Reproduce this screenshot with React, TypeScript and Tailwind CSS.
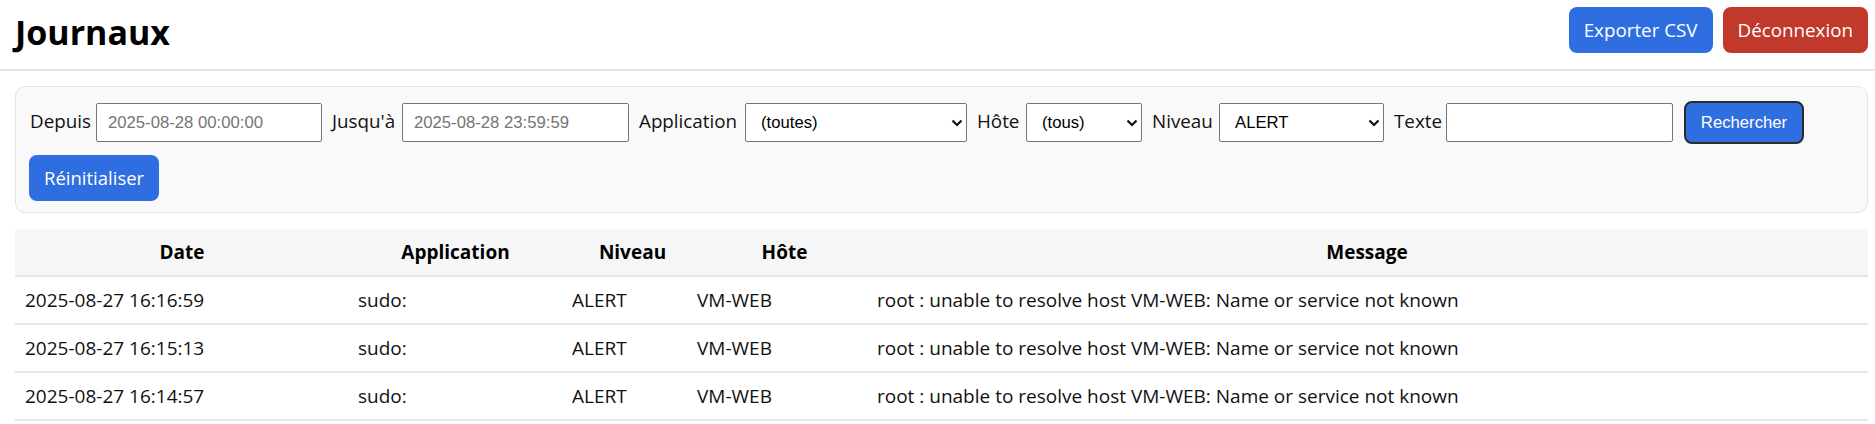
import { useState } from 'react';

type LogRow = { date: string; app: string; level: string; host: string; message: string };

const rows: LogRow[] = [
  { date: '2025-08-27 16:16:59', app: 'sudo:', level: 'ALERT', host: 'VM-WEB', message: 'root : unable to resolve host VM-WEB: Name or service not known' },
  { date: '2025-08-27 16:15:13', app: 'sudo:', level: 'ALERT', host: 'VM-WEB', message: 'root : unable to resolve host VM-WEB: Name or service not known' },
  { date: '2025-08-27 16:14:57', app: 'sudo:', level: 'ALERT', host: 'VM-WEB', message: 'root : unable to resolve host VM-WEB: Name or service not known' },
];

const fieldCls =
  "h-[39px] border border-[#767676] rounded-[2px] bg-white text-[16.7px] text-black font-['Liberation_Sans',Arial,sans-serif] outline-none";

function Chevron() {
  return (
    <svg
      className="pointer-events-none absolute right-[4px] top-1/2 -translate-y-1/2"
      width="12"
      height="8"
      viewBox="0 0 12 8"
      fill="none"
      stroke="#111"
      strokeWidth={2.2}
    >
      <polyline points="1.5,1.5 6,6 10.5,1.5" />
    </svg>
  );
}

function Select({ width, value, options }: { width: string; value: string; options: string[] }) {
  const [v, setV] = useState(value);
  return (
    <div className={`relative ${width}`}>
      <select
        value={v}
        onChange={(e) => setV(e.target.value)}
        className={`${fieldCls} w-full appearance-none pl-[15px] pr-[20px]`}
      >
        {options.map((o) => (
          <option key={o}>{o}</option>
        ))}
      </select>
      <Chevron />
    </div>
  );
}

function Field({ label, labelWidth, children }: { label: string; labelWidth: string; children: React.ReactNode }) {
  return (
    <label className="flex items-center gap-[6px] text-[18.8px] text-[#111] whitespace-nowrap">
      <span className={`-mt-[2px] ${labelWidth}`}>{label}</span>
      {children}
    </label>
  );
}

export default function App() {
  const [texte, setTexte] = useState('');

  return (
    <div className="min-h-screen bg-white font-['Open_Sans',sans-serif] text-[#111]">
      <header className="flex h-[71px] items-start justify-between border-b-2 border-[#e6e6e6] pl-[15px] pr-[7px] pt-[7px]">
        <h1 className="mt-[2px] text-[34px] font-bold leading-[46px] text-black">Journaux</h1>
        <div className="flex gap-[10px]">
          <button type="button" className="h-[46px] rounded-[8px] bg-[#2f6ee0] px-[15px] text-[18.8px] text-white">
            Exporter CSV
          </button>
          <button type="button" className="h-[46px] rounded-[8px] bg-[#c0392b] px-[15px] text-[18.8px] text-white">
            Déconnexion
          </button>
        </div>
      </header>

      <main className="pl-[15px] pr-[7px] pt-[15px]">
        <div className="flex flex-wrap items-center gap-x-[10px] gap-y-[11px] rounded-[10px] border border-[#e3e3e3] bg-[#f9f9f9] pb-[11px] pl-[14px] pr-[14px] pt-[14px]">
          <Field label="Depuis" labelWidth="w-[60px]">
            <input className={`${fieldCls} w-[226px] pl-[11px] placeholder:text-[#757575]`} placeholder="2025-08-28 00:00:00" />
          </Field>
          <Field label="Jusqu'à" labelWidth="w-[64px]">
            <input className={`${fieldCls} w-[227px] pl-[11px] placeholder:text-[#757575]`} placeholder="2025-08-28 23:59:59" />
          </Field>
          <Field label="Application" labelWidth="w-[100px]">
            <Select width="w-[222px]" value="(toutes)" options={['(toutes)', 'sudo:', 'sshd', 'cron']} />
          </Field>
          <Field label="Hôte" labelWidth="w-[43px]">
            <Select width="w-[116px]" value="(tous)" options={['(tous)', 'VM-WEB', 'VM-DB']} />
          </Field>
          <Field label="Niveau" labelWidth="w-[61px]">
            <Select width="w-[165px]" value="ALERT" options={['(tous)', 'EMERG', 'ALERT', 'CRIT', 'ERR', 'WARNING', 'NOTICE', 'INFO', 'DEBUG']} />
          </Field>
          <Field label="Texte" labelWidth="w-[46px]">
            <input value={texte} onChange={(e) => setTexte(e.target.value)} className={`${fieldCls} w-[227px] pl-[8px]`} />
          </Field>
          <button
            type="button"
            className="ml-[1px] h-[43px] w-[120px] rounded-[8px] border-2 border-[#2b2b2b] bg-[#2f6ee0] font-['Liberation_Sans',Arial,sans-serif] text-[16.7px] text-white"
          >
            Rechercher
          </button>
          <button type="button" className="-ml-[1px] h-[46px] rounded-[8px] bg-[#2f6ee0] px-[15px] text-[18.5px] text-white">
            Réinitialiser
          </button>
        </div>

        <div className="mt-[16px] text-[19px]">
          <div className="grid h-[48px] grid-cols-[334px_213px_141px_163px_1fr] items-center border-b-2 border-[#e6e6e6] bg-[#f6f6f6] font-bold text-black">
            <div className="px-[10px] text-center">Date</div>
            <div className="px-[10px] text-center">Application</div>
            <div className="px-[10px] text-center">Niveau</div>
            <div className="px-[10px] text-center">Hôte</div>
            <div className="px-[10px] text-center">Message</div>
          </div>
          {rows.map((r, i) => (
            <div
              key={i}
              className="grid h-[48px] grid-cols-[333px_214px_125px_180px_1fr] items-center border-b-2 border-[#e6e6e6]"
            >
              <div className="px-[10px]">{r.date}</div>
              <div className="px-[10px]">{r.app}</div>
              <div className="px-[10px]">{r.level}</div>
              <div className="px-[10px]">{r.host}</div>
              <div className="px-[10px]">{r.message}</div>
            </div>
          ))}
        </div>
      </main>
    </div>
  );
}
